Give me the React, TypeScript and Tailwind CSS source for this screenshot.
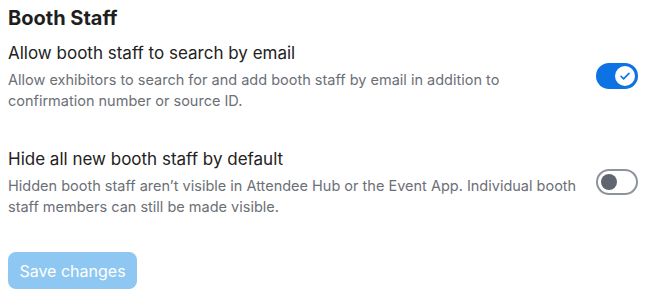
import { useState } from "react";

type Setting = {
  id: string;
  title: string;
  description: string;
  enabled: boolean;
};

const initialSettings: Setting[] = [
  {
    id: "search",
    title: "Allow booth staff to search by email",
    description:
      "Allow exhibitors to search for and add booth staff by email in addition to confirmation number or source ID.",
    enabled: true,
  },
  {
    id: "hide",
    title: "Hide all new booth staff by default",
    description:
      "Hidden booth staff aren\u2019t visible in Attendee Hub or the Event App. Individual booth staff members can still be made visible.",
    enabled: false,
  },
];

function Toggle({ on, onClick }: { on: boolean; onClick: () => void }) {
  if (on) {
    return (
      <button
        onClick={onClick}
        className="relative shrink-0 w-[42px] h-[26px] rounded-full bg-[#0d72e3]"
      >
        <span className="absolute right-[3px] top-[3px] w-[20px] h-[20px] rounded-full bg-white flex items-center justify-center">
          <svg width="12" height="12" viewBox="0 0 12 12" fill="none">
            <path
              d="M2 6.3l2.6 2.6L10 3.4"
              stroke="#0d72e3"
              strokeWidth="1.6"
              strokeLinecap="round"
              strokeLinejoin="round"
            />
          </svg>
        </span>
      </button>
    );
  }
  return (
    <button
      onClick={onClick}
      className="relative shrink-0 w-[42px] h-[26px] rounded-full bg-white border-2 border-[#8d939b]"
    >
      <span className="absolute left-[3px] top-[3px] w-[16px] h-[16px] rounded-full bg-[#5f6670]" />
    </button>
  );
}

export default function App() {
  const [settings, setSettings] = useState(initialSettings);

  return (
    <div
      className="bg-white w-[665px] h-[300px] pl-2 pr-[27px] pt-1"
      style={{ fontFamily: "Inter, 'Noto Sans', sans-serif" }}
    >
      <h2 className="text-[20px] leading-7 font-bold text-[#1f1f1f]">Booth Staff</h2>

      <div className="mt-[9px] flex flex-col gap-[36px]">
        {settings.map((s) => (
          <div key={s.id} className="flex items-center gap-4">
            <div className="flex-1">
              <div className="text-[17px] leading-6 text-[#222]">{s.title}</div>
              <p className="mt-1 text-[14.5px] leading-[21px] text-[#6b6f76]">{s.description}</p>
            </div>
            <Toggle
              on={s.enabled}
              onClick={() =>
                setSettings((prev) =>
                  prev.map((p) => (p.id === s.id ? { ...p, enabled: !p.enabled } : p))
                )
              }
            />
          </div>
        ))}
      </div>

      <button className="mt-[35px] h-[37px] w-[129px] rounded-lg bg-[#8ec8f2] text-white text-[16px]">
        Save changes
      </button>
    </div>
  );
}
